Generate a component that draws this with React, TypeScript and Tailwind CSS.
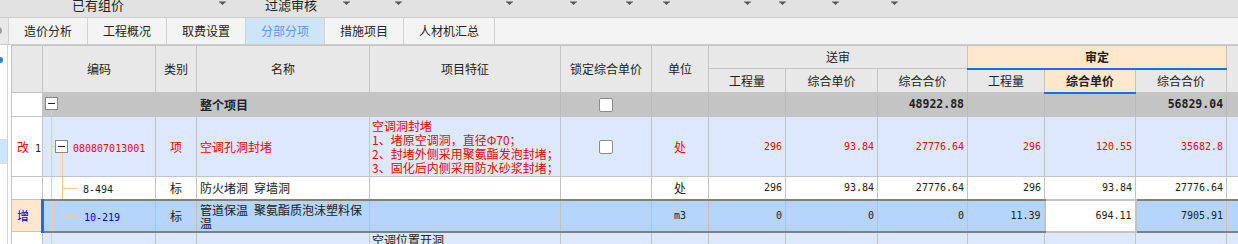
import React from 'react';

const cjk = '"Noto Sans CJK SC", "Liberation Sans", sans-serif';
const mono = '"DejaVu Sans Mono", "Liberation Mono", monospace';

const colWidths = [31, 113, 41, 173, 191, 91, 57, 77, 92, 90, 77, 91, 91, 12];

// top filter bar: segment widths end right where each dropdown arrow sits
const filterSegments = [
  { w: 226, label: '已有组价', pl: 72 },
  { w: 124, label: '过滤审核', pl: 39 },
  { w: 52 },
  { w: 111 },
  { w: 64 },
  { w: 56 },
  { w: 37 },
  { w: 81 },
  { w: 35 },
  { w: 53 },
  { w: 59 },
];

const tabs = [
  { label: '造价分析', w: 80 },
  { label: '工程概况', w: 80 },
  { label: '取费设置', w: 80 },
  { label: '分部分项', w: 80, active: true },
  { label: '措施项目', w: 80 },
  { label: '人材机汇总', w: 92 },
];

function Arrow() {
  return (
    <svg width="7" height="5" viewBox="0 0 7 5" className="shrink-0">
      <path d="M0 0.5h7v1H0z M1 1.5h5L3.5 4z" fill="#555" />
    </svg>
  );
}

function Checkbox() {
  return <div className="mx-auto h-[14px] w-[14px] rounded-[2px] border border-[#8c8c8c] bg-white" />;
}

function MinusBox({ className = '' }: { className?: string }) {
  return (
    <div className={`absolute flex h-[13px] w-[13px] items-center justify-center border border-[#888] bg-white ${className}`}>
      <div className="h-px w-[7px] bg-[#222]" />
    </div>
  );
}

const line = 'absolute bg-[#f6cb94]';

export default function App() {
  const td = 'border border-[#c3c3c3] p-0';
  const num = `${td} pr-[3px] text-right text-[10px]`;
  const thick = 'border-y-2 border-y-[#808080]';

  return (
    <div className="h-[244px] w-[1238px] overflow-hidden bg-white text-[12px] text-[#222]" style={{ fontFamily: cjk }}>
      {/* Filter bar (cut off at the top) */}
      <div className="flex h-[18px] items-start border-b border-[#cbcbcb] bg-[#e2e2e2]">
        {filterSegments.map((s, i) => (
          <div key={i} className="flex h-full shrink-0 items-start justify-between pt-[1px]" style={{ width: s.w }}>
            {s.label ? (
              <span className="-mt-[3px] text-[13px] leading-[13px] text-[#222]" style={{ paddingLeft: s.pl }}>
                {s.label}
              </span>
            ) : (
              <span />
            )}
            <Arrow />
          </div>
        ))}
      </div>

      {/* Tabs */}
      <div className="flex h-[27px] border-b border-[#cfcfcf] bg-[#f4f4f4]">
        <div className="relative w-[8px] shrink-0 overflow-hidden bg-[#e9e9e9]">
          <div className="absolute -left-[5px] top-[9px] h-[7px] w-[7px] rounded-full bg-[#9a9a9a]" />
        </div>
        <div className="flex border-l border-[#d2d2d2]">
          {tabs.map((t) => (
            <div
              key={t.label}
              className={`flex shrink-0 items-center justify-center border-r border-[#d2d2d2] ${t.active ? 'bg-[#cde5f8] text-[#5a9be6]' : 'text-[#222]'}`}
              style={{ width: t.w - 1 }}
            >
              {t.label}
            </div>
          ))}
        </div>
      </div>

      <div className="flex">
        {/* Side panel edge */}
        <div className="flex w-[11px] shrink-0">
          <div className="relative w-[8px] border-r border-[#d3d3d3] bg-white">
            <div className="absolute -left-[3px] top-[12px] h-[6px] w-[6px] rounded-full bg-[#2a7be4]" />
            <div className="mt-[94px] h-[25px] bg-[#cde5f8]" />
          </div>
        </div>

        {/* Grid */}
        <table className="table-fixed border-collapse" style={{ width: 1227 }}>
          <colgroup>
            {colWidths.map((w, i) => (
              <col key={i} style={{ width: w }} />
            ))}
          </colgroup>
          <thead>
            <tr className="h-[23px] bg-[#e8e8e8]">
              <th rowSpan={2} className={`${td} font-normal`} />
              <th rowSpan={2} className={`${td} font-normal`}>编码</th>
              <th rowSpan={2} className={`${td} font-normal`}>类别</th>
              <th rowSpan={2} className={`${td} font-normal`}>名称</th>
              <th rowSpan={2} className={`${td} font-normal`}>项目特征</th>
              <th rowSpan={2} className={`${td} font-normal`}>锁定综合单价</th>
              <th rowSpan={2} className={`${td} font-normal`}>单位</th>
              <th colSpan={3} className={`${td} font-normal`}>送审</th>
              <th colSpan={3} className={`${td} border-b-2 border-b-[#1a6fe3] bg-[#fee8cb] font-bold`}>审定</th>
              <th rowSpan={2} className={`${td} font-normal`} />
            </tr>
            <tr className="h-[24px] bg-[#e8e8e8]">
              <th className={`${td} font-normal`}>工程量</th>
              <th className={`${td} font-normal`}>综合单价</th>
              <th className={`${td} font-normal`}>综合合价</th>
              <th className={`${td} font-normal`}>工程量</th>
              <th className={`${td} border-b-2 border-b-[#1a6fe3] bg-[#fee8cb] font-bold`}>综合单价</th>
              <th className={`${td} font-normal`}>综合合价</th>
            </tr>
          </thead>
          <tbody>
            {/* 整个项目 */}
            <tr className="h-[24px] bg-[#c4c4c4]">
              <td className={`${td} bg-white`} />
              <td className={`${td} relative border-r-[#c4c4c4]`}>
                <MinusBox className="left-[2px] top-[4px]" />
                <div className={`${line} left-[8px] top-[17px] bottom-0 w-px`} />
              </td>
              <td className={`${td} border-x-[#c4c4c4]`} />
              <td className={`${td} border-x-[#c4c4c4] pl-[3px] font-bold`}>整个项目</td>
              <td className={`${td} border-l-[#c4c4c4] border-r-[#bababa]`} />
              <td className={`${td} border-x-[#bababa]`}>
                <Checkbox />
              </td>
              <td className={`${td} border-x-[#bababa]`} />
              <td className={`${td} border-x-[#bababa]`} />
              <td className={`${td} border-x-[#bababa]`} />
              <td className={`${td} border-x-[#bababa] pr-[3px] text-right text-[11.5px] font-bold`} style={{ fontFamily: mono }}>48922.88</td>
              <td className={`${td} border-x-[#bababa]`} />
              <td className={`${td} border-x-[#bababa]`} />
              <td className={`${td} border-x-[#bababa] pr-[3px] text-right text-[11.5px] font-bold`} style={{ fontFamily: mono }}>56829.04</td>
              <td className={`${td} border-l-[#bababa]`} />
            </tr>

            {/* 改 1 */}
            <tr className="h-[60px] bg-[#dce9fc] text-[#ff0000]">
              <td className={`${td} bg-white pl-[5px]`}>
                改<span className="ml-[6px] text-[10px] text-[#222]" style={{ fontFamily: mono }}>1</span>
              </td>
              <td className={`${td} relative`}>
                <div className={`${line} left-[8px] top-0 bottom-0 w-px`} />
                <div className={`${line} left-[8px] top-[29px] h-px w-[5px]`} />
                <MinusBox className="left-[12px] top-[23px]" />
                <div className={`${line} left-[19px] top-[36px] bottom-0 w-px`} />
                <span className="pl-[30px] text-[10px]" style={{ fontFamily: mono }}>080807013001</span>
              </td>
              <td className={`${td} text-center`}>项</td>
              <td className={`${td} pl-[3px]`}>空调孔洞封堵</td>
              <td className={`${td} overflow-hidden whitespace-nowrap pl-[2px] pt-[2px] align-top leading-[14px]`}>
                <div>空调洞封堵</div>
                <div>1、堵原空调洞，直径Φ70；</div>
                <div>2、封堵外侧采用聚氨酯发泡封堵；</div>
                <div>3、固化后内侧采用防水砂浆封堵；</div>
              </td>
              <td className={td}>
                <Checkbox />
              </td>
              <td className={`${td} text-center`}>处</td>
              <td className={num} style={{ fontFamily: mono }}>296</td>
              <td className={num} style={{ fontFamily: mono }}>93.84</td>
              <td className={num} style={{ fontFamily: mono }}>27776.64</td>
              <td className={num} style={{ fontFamily: mono }}>296</td>
              <td className={num} style={{ fontFamily: mono }}>120.55</td>
              <td className={num} style={{ fontFamily: mono }}>35682.8</td>
              <td className={td} />
            </tr>

            {/* 8-494 */}
            <tr className="h-[23px] bg-white">
              <td className={td} />
              <td className={`${td} relative`}>
                <div className={`${line} left-[8px] top-0 bottom-0 w-px`} />
                <div className={`${line} left-[19px] top-0 bottom-0 w-px`} />
                <div className={`${line} left-[19px] top-[11px] h-px w-[15px]`} />
                <span className="pl-[40px] text-[10px]" style={{ fontFamily: mono }}>8-494</span>
              </td>
              <td className={`${td} text-center`}>标</td>
              <td className={`${td} pl-[3px]`}>防火堵洞{'\u2002'}穿墙洞</td>
              <td className={td} />
              <td className={td} />
              <td className={`${td} text-center`}>处</td>
              <td className={num} style={{ fontFamily: mono }}>296</td>
              <td className={num} style={{ fontFamily: mono }}>93.84</td>
              <td className={num} style={{ fontFamily: mono }}>27776.64</td>
              <td className={num} style={{ fontFamily: mono }}>296</td>
              <td className={num} style={{ fontFamily: mono }}>93.84</td>
              <td className={num} style={{ fontFamily: mono }}>27776.64</td>
              <td className={td} />
            </tr>

            {/* 增 */}
            <tr className="h-[32px] bg-[#b5d5fd]">
              <td className={`${td} border-r-[3px] border-r-[#1b6fe6] bg-[#fee8cb] pl-[5px] text-[#0000ff]`}>增</td>
              <td className={`${td} relative ${thick}`}>
                <div className={`${line} left-[8px] top-0 bottom-0 w-px`} />
                <div className={`${line} left-[19px] top-0 h-[16px] w-px`} />
                <div className={`${line} left-[19px] top-[15px] h-px w-[15px]`} />
                <span className="pl-[40px] text-[10px] text-[#0000ff]" style={{ fontFamily: mono }}>10-219</span>
              </td>
              <td className={`${td} ${thick} text-center`}>标</td>
              <td className={`${td} ${thick} pl-[3px] pr-[4px] leading-[13px]`}>管道保温{'\u2002'}聚氨酯质泡沫塑料保温</td>
              <td className={`${td} ${thick}`} />
              <td className={`${td} ${thick}`} />
              <td className={`${td} ${thick} text-center text-[10px]`} style={{ fontFamily: mono }}>m3</td>
              <td className={`${num} ${thick}`} style={{ fontFamily: mono }}>0</td>
              <td className={`${num} ${thick}`} style={{ fontFamily: mono }}>0</td>
              <td className={`${num} ${thick}`} style={{ fontFamily: mono }}>0</td>
              <td className={`${num} ${thick}`} style={{ fontFamily: mono }}>11.39</td>
              <td className={`${num} border-2 border-[#7a7a7a] bg-white`} style={{ fontFamily: mono }}>694.11</td>
              <td className={`${num} ${thick}`} style={{ fontFamily: mono }}>7905.91</td>
              <td className={`${td} ${thick}`} />
            </tr>

            {/* next row, cut off */}
            <tr className="h-[30px] bg-[#dce9fc]">
              <td className={`${td} bg-white`} />
              <td className={`${td} relative`}>
                <div className={`${line} left-[8px] top-0 bottom-0 w-px`} />
              </td>
              <td className={td} />
              <td className={td} />
              <td className={`${td} whitespace-nowrap pl-[2px] align-top leading-[14px]`}>空调位置开洞</td>
              <td className={td} />
              <td className={td} />
              <td className={td} />
              <td className={td} />
              <td className={td} />
              <td className={td} />
              <td className={td} />
              <td className={td} />
              <td className={td} />
            </tr>
          </tbody>
        </table>
      </div>
    </div>
  );
}
